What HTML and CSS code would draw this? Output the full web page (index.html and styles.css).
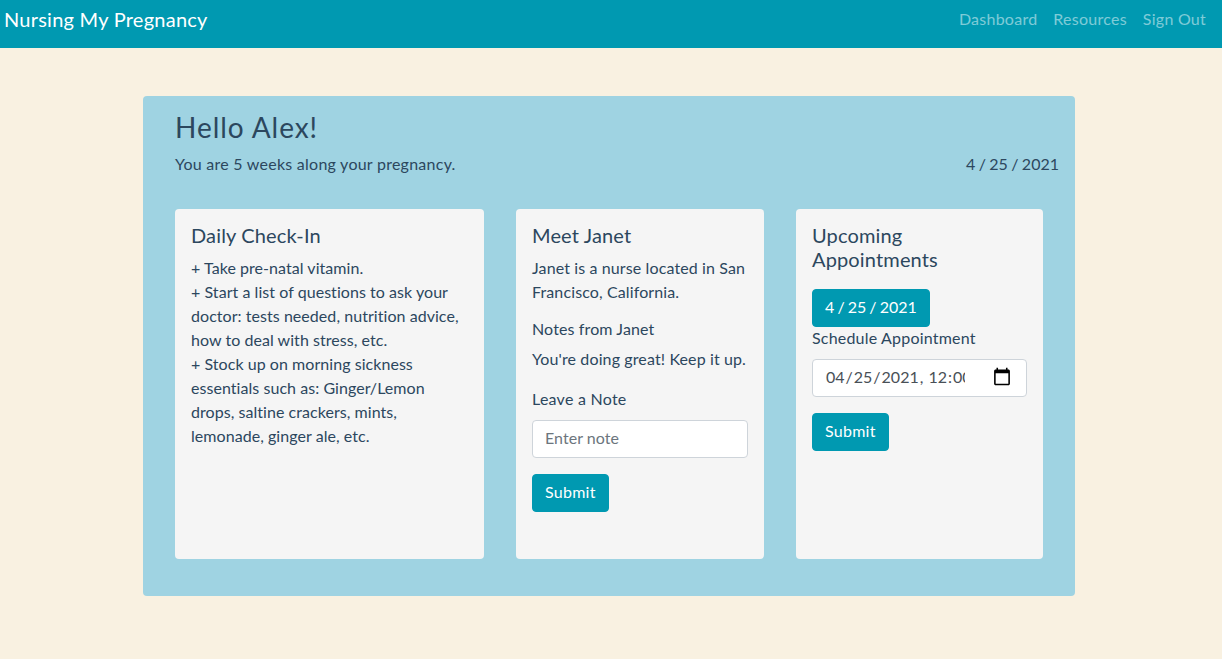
FILE: index.html
```html
<!DOCTYPE html>
<html lang="en">
<head>
<meta charset="utf-8">
<title>Nursing My Pregnancy</title>
<link rel="stylesheet" href="styles.css">
</head>
<body>
<nav class="navbar">
  <a class="brand" href="#">Nursing My Pregnancy</a>
  <div class="nav-links">
    <a href="#">Dashboard</a>
    <a href="#">Resources</a>
    <a href="#">Sign Out</a>
  </div>
</nav>
<main class="panel">
  <h1 class="hello">Hello Alex!</h1>
  <div class="sub-row">
    <p>You are 5 weeks along your pregnancy.</p>
    <p class="date">4 / 25 / 2021</p>
  </div>
  <div class="cards">
    <section class="card card-wide">
      <h2>Daily Check-In</h2>
      <p>+ Take pre-natal vitamin.<br>+ Start a list of questions to ask your doctor: tests needed, nutrition advice, how to deal with stress, etc.<br>+ Stock up on morning sickness essentials such as: Ginger/Lemon drops, saltine crackers, mints, lemonade, ginger ale, etc.</p>
    </section>
    <section class="card card-mid">
      <h2>Meet Janet</h2>
      <p class="para">Janet is a nurse located in San Francisco, California.</p>
      <p class="notes-title">Notes from Janet</p>
      <p class="para">You're doing great! Keep it up.</p>
      <form class="form">
        <label class="note-label" for="note">Leave a Note</label>
        <input class="field field-note" id="note" type="text" placeholder="Enter note">
        <button class="btn" type="button">Submit</button>
      </form>
    </section>
    <section class="card card-appt">
      <h2 class="h-appt">Upcoming Appointments</h2>
      <button class="btn btn-date" type="button">4 / 25 / 2021</button>
      <form class="form">
        <label class="appt-label" for="appt">Schedule Appointment</label>
        <input class="field field-date" id="appt" type="datetime-local" value="2021-04-25T12:00">
        <button class="btn" type="button">Submit</button>
      </form>
    </section>
  </div>
</main>
</body>
</html>
```

FILE: styles.css
```css
* { box-sizing: border-box; }
html, body { margin: 0; height: 100%; }
body {
  background: #f9f1e1;
  color: #2c475e;
  font-family: "Lato", "Noto Sans", sans-serif;
  font-size: 16px;
  line-height: 24px;
  letter-spacing: 0.25px;
}
p { margin: 0; }
a { text-decoration: none; }
.navbar {
  height: 48px;
  background: #0099b1;
  display: flex;
  justify-content: space-between;
  align-items: flex-start;
  padding: 4px 16px 0 4px;
}
.brand { color: #fff; font-size: 20px; line-height: 30px; }
.nav-links { display: flex; gap: 16px; line-height: 30px; }
.nav-links a { color: rgba(255, 255, 255, 0.5); }
.panel {
  width: 932px;
  height: 500px;
  margin: 48px 0 0 143px;
  background: #9fd3e2;
  border-radius: 4px;
  padding: 15px 16px 0 32px;
}
.hello { margin: 0 0 8px; font-size: 28px; line-height: 33px; font-weight: 400; letter-spacing: 0.95px; }
.sub-row { display: flex; justify-content: space-between; height: 57px; }
.date { letter-spacing: 0; word-spacing: -0.7px; }
.cards { display: flex; gap: 32px; height: 350px; }
.card {
  background: #f5f5f5;
  border-radius: 4px;
  padding: 14px 16px 16px;
}
.card-wide { width: 309px; letter-spacing: 0.05px; }
.card-mid { width: 248px; letter-spacing: 0.12px; }
.card-appt { width: 247px; }
.card h2 { margin: 0 0 9px; font-size: 20px; line-height: 24px; font-weight: 400; letter-spacing: 0.15px; }
.card .h-appt { margin-bottom: 18px; }
.para { margin-bottom: 16px; }
.para + .notes-title { margin-top: -3px; }
.notes-title { margin-bottom: 6px; }
.form { display: flex; flex-direction: column; align-items: flex-start; }
.note-label { margin-bottom: 9px; letter-spacing: 0.25px; }
.appt-label { line-height: 22px; margin-bottom: 10px; letter-spacing: 0.2px; }
.field {
  width: 100%;
  height: 38px;
  padding: 4px 12px 8px;
  border: 1px solid #ced4da;
  border-radius: 4px;
  background: #fff;
  color: #495057;
  font: inherit;
  letter-spacing: inherit;
  margin-bottom: 16px;
}
.field-note { letter-spacing: 0.05px; }
.field::placeholder { color: #6c757d; opacity: 1; }
.field-date { padding: 5px 12px 7px; letter-spacing: 0; }
.field-date::-webkit-datetime-edit { max-width: 140px; overflow: hidden; flex: 0 0 140px; }
.field-date::-webkit-calendar-picker-indicator { width: 20px; height: 20px; margin-left: auto; }
.btn {
  height: 38px;
  padding: 5px 12px 7px;
  border: 1px solid #0099b1;
  border-radius: 4px;
  background: #0099b1;
  color: #fff;
  font: inherit;
  letter-spacing: 0.25px;
}
.btn-date { display: block; letter-spacing: 0; word-spacing: -1px; }
```
